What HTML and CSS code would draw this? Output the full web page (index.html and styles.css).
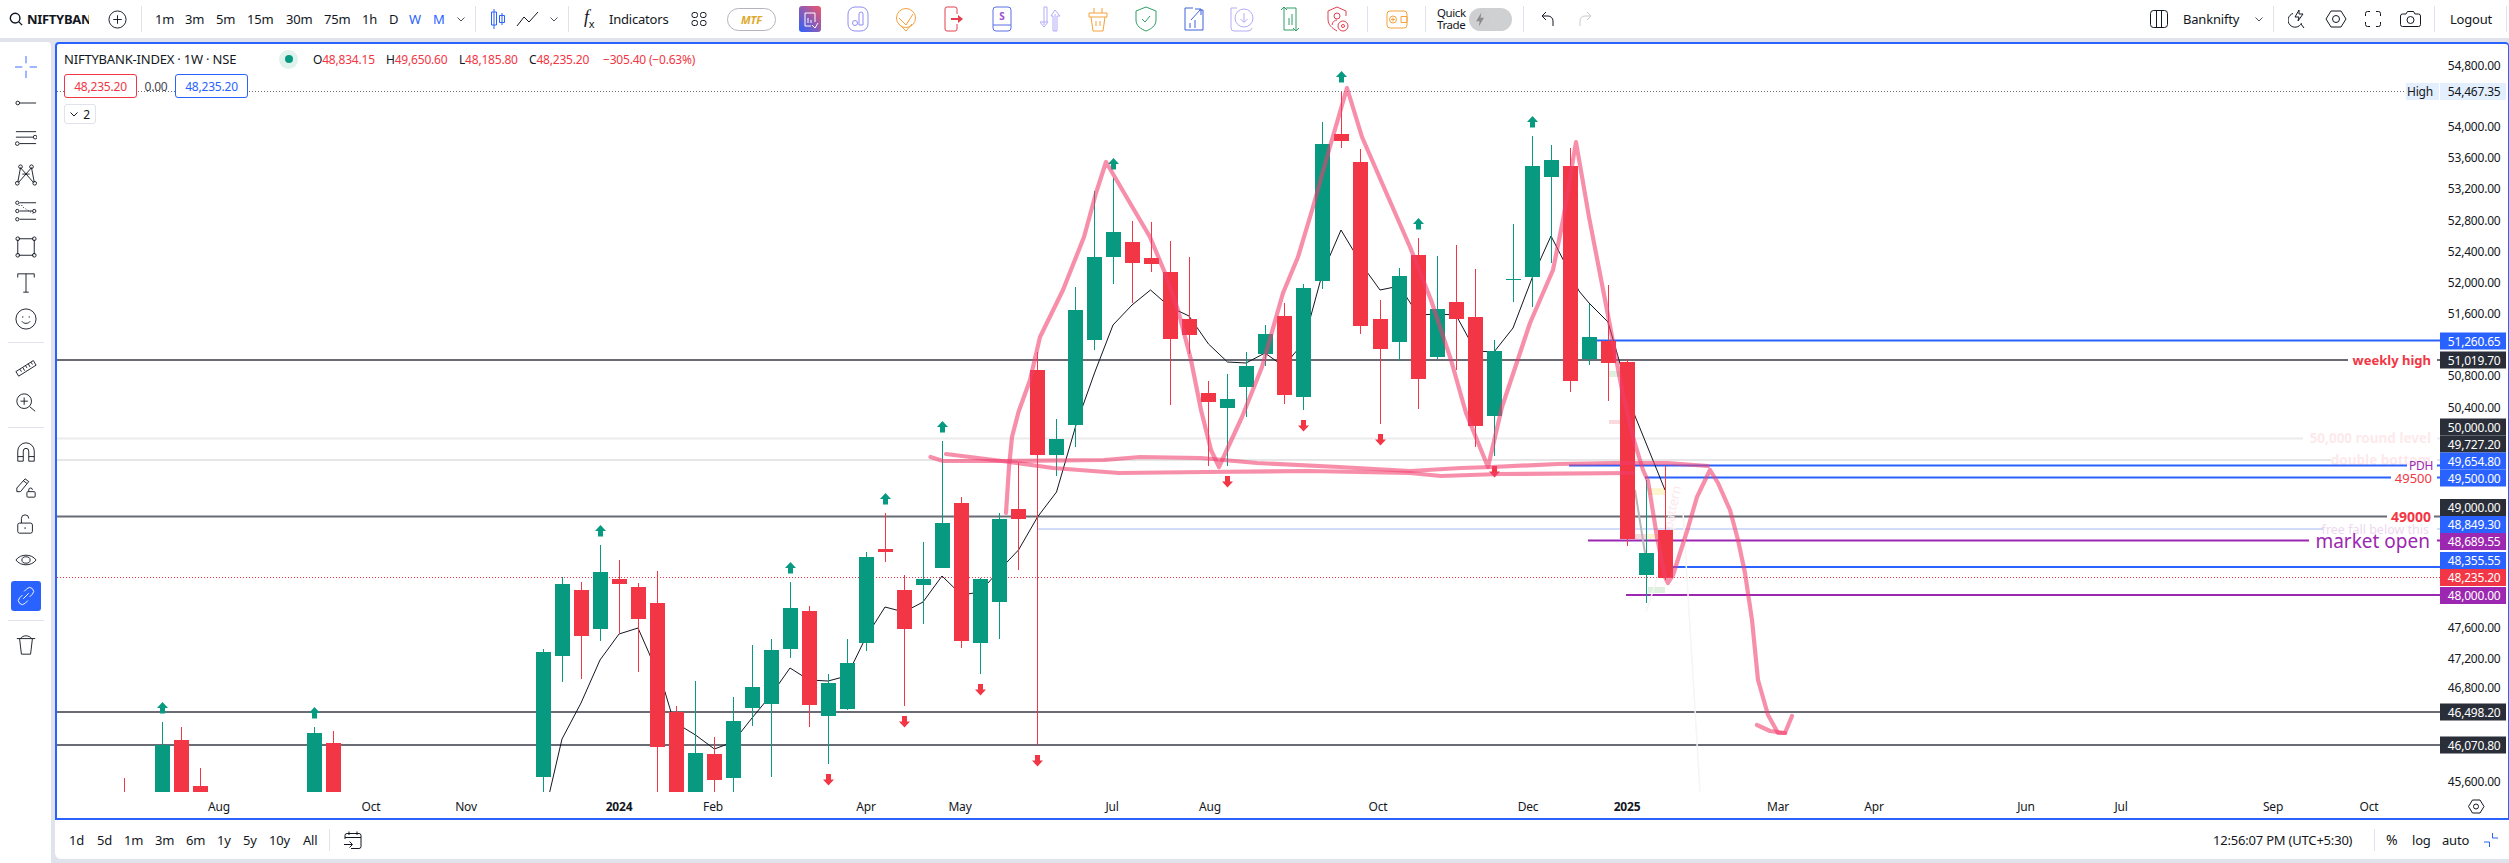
FILE: index.html
```html
<!DOCTYPE html>
<html lang="en">
<head>
<meta charset="utf-8">
<title>NIFTYBANK-INDEX chart</title>
<link rel="stylesheet" href="styles.css">
</head>
<body>
<header class="topbar">
  <div class="search">
    <svg class="i16" viewBox="0 0 16 16"><circle cx="7" cy="7" r="5.500"/><path d="M11 11l4 4"/></svg>
    <span class="symbol"><b>NIFTYBANK-INDEX</b></span>
  </div>
  <svg class="plus" viewBox="0 0 20 20"><circle cx="10" cy="10" r="9"/><path d="M10 5.500v9M5.500 10h9"/></svg>
  <span class="sep sep-a"></span>
  <nav class="tfs">
    <span>1m</span><span>3m</span><span>5m</span><span>15m</span><span>30m</span><span>75m</span><span>1h</span><span>D</span><span class="on">W</span><span class="on">M</span>
    <svg class="chev" viewBox="0 0 8 5"><path d="M.5.5L4 4 7.500.5"/></svg>
  </nav>
  <span class="sep sep-b"></span>
  <svg class="candle-ico" viewBox="0 0 14 20"><path d="M3 0v20M.5 3v13H5.500V3zM11 4v12M8.500 6.500h5v7h-5z"/></svg>
  <svg class="line-ico" viewBox="0 0 23 16"><path d="M1 15L8 6l5 5L22 1"/></svg>
  <svg class="chev chev-b" viewBox="0 0 8 5"><path d="M.5.5L4 4 7.500.5"/></svg>
  <span class="sep sep-c"></span>
  <span class="fx"><i>f</i><sub>x</sub></span>
  <span class="indicators">Indicators</span>
  <svg class="grid-ico" viewBox="0 0 16 16"><rect x="1" y="1.500" width="5.500" height="5" rx="2"/><rect x="9.500" y="1.500" width="5.500" height="5" rx="2"/><rect x="1" y="9.500" width="5.500" height="5" rx="2"/><rect x="9.500" y="9.500" width="5.500" height="5" rx="2"/></svg>
  <span class="mtf">MTF</span>
  <div class="apps">
    <svg viewBox="0 0 24 28"><defs><linearGradient id="grad" x1="0" y1="1" x2="1" y2="0"><stop offset="0" stop-color="#2962ff"/><stop offset="1" stop-color="#f2566b"/></linearGradient></defs><rect x="1" y="1" width="22" height="26" rx="3" fill="url(#grad)" stroke="none"/><path class="w" d="M7 8h10v9M7 8v13h6M10 18v-5M13 18v-3M14 20l3 3 3-5"/></svg>
    <svg class="lav" viewBox="0 0 24 28"><rect x="2" y="2" width="20" height="24" rx="7"/><circle cx="9" cy="18" r="2.500"/><path d="M13 20V9a2 2 0 014 0v11z"/></svg>
    <svg class="ora" viewBox="0 0 24 28"><circle cx="12" cy="13" r="9.500"/><path d="M5 13l7 7 7-11M5 19l7 7 6-7"/></svg>
    <svg class="red" viewBox="0 0 24 28"><path d="M15 9V4a2 2 0 00-2-2H5a2 2 0 00-2 2v20a2 2 0 002 2h8a2 2 0 002-2v-5"/><path class="fr" d="M9 13h7v-3l5 4-5 4v-3H9z"/></svg>
    <svg class="blu" viewBox="0 0 24 28"><rect x="3" y="2" width="18" height="24" rx="3"/><path d="M3 20h18"/><text class="s-glyph" x="12" y="14.500">S</text></svg>
    <svg class="lav2" viewBox="0 0 24 28"><path d="M6 2v18M2 17l4 5 4-5zM6 2h3v15M17 26V9M13 11l4-6 5 6h-3v15h-4V11z"/></svg>
    <svg class="ora" viewBox="0 0 24 28"><path d="M3 8h18v4H3zM5 12l2 14h10l2-14M8 8V3M16 8V3M10 16v5M14 16v5"/></svg>
    <svg class="grn" viewBox="0 0 24 28"><path d="M12 2l10 4v9c0 6-5 9-10 11C7 24 2 21 2 15V6z"/><path d="M8 14l3 3 5-6"/></svg>
    <svg class="blu2" viewBox="0 0 24 28"><path d="M11 3H3v22h18V5h-4M9 15l9-10M13 4h6v6M8 18v5M13 15v8"/></svg>
    <svg class="lav2" viewBox="0 0 24 28"><path d="M7 3H1v20a3 3 0 003 3h14a4 4 0 004-3"/><circle cx="14" cy="13" r="9"/><path d="M14 8v9M10.500 14l3.500 3.500 3.500-3.500"/></svg>
    <svg class="grn" viewBox="0 0 24 28"><path d="M3 5l3-3 3 3M6 3v22h10M21 23l-3 3-3-3M18 25V3H8M11 20v-7M14 20V9"/></svg>
    <svg class="red" viewBox="0 0 24 28"><path d="M11 2L2 6v8c0 6 4 9 9 12M11 2l9 4v5"/><circle cx="11" cy="11" r="3"/><path d="M6 20c0-3 3-5 5-5"/><circle cx="17" cy="21" r="5"/><circle cx="17" cy="21" r="1.500"/></svg>
  </div>
  <span class="sep sep-d"></span>
  <svg class="wallet ora" viewBox="0 0 24 24"><rect x="2" y="4" width="20" height="17" rx="3"/><circle cx="8" cy="12.500" r="3.500"/><path d="M8 10.500v4M6 12.500h4M16 9.500h6v6h-6z"/></svg>
  <span class="sep sep-e"></span>
  <span class="quick">Quick<br>Trade</span>
  <span class="toggle"><svg viewBox="0 0 24 24"><circle cx="12" cy="12" r="11"/><path class="bolt" d="M13 4l-6 10h4l-1 6 6-10h-4z"/></svg></span>
  <span class="sep sep-f"></span>
  <svg class="undo" viewBox="0 0 14 16"><path d="M5 1L1 5l4 4M1 5h6a5 5 0 015 5v5"/></svg>
  <svg class="undo redo" viewBox="0 0 14 16"><path d="M9 1l4 4-4 4M13 5H7a5 5 0 00-5 5v5"/></svg>
  <div class="top-right">
    <svg class="cols" viewBox="0 0 18 18"><rect x=".5" y=".5" width="17" height="17" rx="3"/><path d="M6.500.5v17M11.500.5v17"/></svg>
    <span class="layout">Banknifty</span>
    <svg class="chev chev-c" viewBox="0 0 8 5"><path d="M.5.5L4 4 7.500.5"/></svg>
    <span class="sep sep-g"></span>
    <svg class="flash" viewBox="0 0 19 20"><path d="M5 4.500A7 7 0 1013.500 14M16 19l-3-4M11 1L7 8h4l-1 4 5-7h-4z"/></svg>
    <svg class="hex" viewBox="0 0 22 18"><path d="M1 9l5-8h10l5 8-5 8H6z"/><circle cx="11" cy="9" r="3.500"/></svg>
    <svg class="full" viewBox="0 0 16 16"><path d="M.5 5V2.500a2 2 0 012-2H5M11 .5h2.500a2 2 0 012 2V5M15.500 11v2.500a2 2 0 01-2 2H11M5 15.500H2.500a2 2 0 01-2-2V11"/></svg>
    <svg class="cam" viewBox="0 0 21 16"><path d="M2.500 3H6l1.500-2.500h6L15 3h3.500a2 2 0 012 2v8.500a2 2 0 01-2 2h-16a2 2 0 01-2-2V5a2 2 0 012-2z"/><circle cx="10.500" cy="9" r="3.500"/></svg>
    <span class="sep sep-h"></span>
    <span class="logout">Logout</span>
    <span class="sep sep-i"></span>
  </div>
</header>

<div class="main">
  <aside class="sidebar">
    <div class="slot"><svg class="blue-stroke" viewBox="0 0 24 24"><path d="M0 12h8M16 12h8M12 0v8M12 16v8"/></svg></div>
    <div class="slot"><svg viewBox="0 0 24 24"><circle cx="3" cy="12" r="2"/><path d="M5 12h18"/></svg></div>
    <div class="slot"><svg viewBox="0 0 24 24"><path d="M1 4h22M1 10h19M5 17h18"/><circle cx="22" cy="10" r="2"/><circle cx="2.500" cy="17" r="2"/></svg></div>
    <div class="slot"><svg viewBox="0 0 24 24"><path d="M3 20L6 4l14 16M18 4l3 16M18 4L4 20M8 11h8"/><circle cx="2.500" cy="21" r="2"/><circle cx="6" cy="3" r="2"/><circle cx="18" cy="3" r="2"/><circle cx="21.500" cy="21" r="2"/></svg></div>
    <div class="slot"><svg viewBox="0 0 24 24"><path d="M5 3h18M5 12h14M5 21h18"/><path class="dots" d="M4 6h4M9 8l11 7"/><circle cx="2.500" cy="3" r="1.800"/><circle cx="2.500" cy="12" r="1.800"/><circle cx="2.500" cy="21" r="1.800"/><circle cx="21" cy="12" r="1.800"/></svg></div>
    <div class="slot"><svg viewBox="0 0 24 24"><path d="M4 3h16M4 21h16M3 4v16M21 4v16"/><circle cx="3" cy="3" r="2"/><circle cx="21" cy="3" r="2"/><circle cx="3" cy="21" r="2"/><circle cx="21" cy="21" r="2"/></svg></div>
    <div class="slot"><svg viewBox="0 0 24 24"><path d="M3 6V2h18v4M12 2v20M9 22h6"/></svg></div>
    <div class="slot"><svg viewBox="0 0 24 24"><circle cx="12" cy="12" r="11"/><path d="M7.500 14.500c2 3 7 3 9 0M8.500 9v1.500M15.500 9v1.500"/></svg></div>
    <hr class="rule rule-first">
    <div class="slot"><svg viewBox="0 0 24 24"><path d="M1 17L20 5l3 5L4 22zM5.500 14.500l1.500 2.500M8.500 12.500l2 3.500M11.500 10.500l1.500 2.500M14.500 8.500l2 3.500M17.500 6.800l1.500 2.500"/></svg></div>
    <div class="slot"><svg viewBox="0 0 24 24"><circle cx="10" cy="10" r="8"/><path d="M10 6v8M6 10h8M16 16l6 5"/></svg></div>
    <hr class="rule">
    <div class="slot"><svg viewBox="0 0 24 24"><path d="M3 22V11a9 9 0 0118 0v11h-6V11a3 3 0 00-6 0v11zM3 17h6M15 17h6"/></svg></div>
    <div class="slot"><svg viewBox="0 0 24 24"><path d="M2 12L11 2l4 3-9 11-4 0zM9 4l4 3"/><rect x="13" y="16" width="9" height="6" rx="1"/><path d="M15 16v-2a2 2 0 014 0"/></svg></div>
    <div class="slot"><svg viewBox="0 0 24 24"><rect x="3" y="11" width="16" height="11" rx="2"/><path d="M7 11V6a4 4 0 018 0M11 15.500v2"/></svg></div>
    <div class="slot"><svg viewBox="0 0 24 24"><path d="M1 12c5-7 17-7 22 0-5 7-17 7-22 0z"/><ellipse cx="12" cy="12" rx="4.500" ry="3.500"/></svg></div>
    <div class="slot active"><svg class="white-stroke" viewBox="0 0 24 24"><path d="M10 7l3-3a4 4 0 016 6l-3 3M14 17l-3 3a4 4 0 01-6-6l3-3M9 15l6-6"/></svg></div>
    <hr class="rule">
    <div class="slot"><svg viewBox="0 0 24 24"><path d="M2 5h20M5 5l2 17h10l2-17M6 5c2-4 10-4 12 0"/></svg></div>
  </aside>

  <section class="workspace">
    <div class="chart">
      <div class="legend">
        <div class="leg-row">
          <span class="leg-title">NIFTYBANK-INDEX · 1W · NSE</span>
          <span class="status"><span class="status-dot"></span></span>
          <span class="ohlc">O<em>48,834.15</em></span>
          <span class="ohlc">H<em>49,650.60</em></span>
          <span class="ohlc ohlc-l">L<em>48,185.80</em></span>
          <span class="ohlc ohlc-c">C<em>48,235.20</em></span>
          <em class="chg">−305.40 (−0.63%)</em>
        </div>
        <div class="leg-row prices">
          <span class="pbox pbox-red">48,235.20</span>
          <span class="spread">0.00</span>
          <span class="pbox pbox-blue">48,235.20</span>
        </div>
        <div class="collapse"><svg viewBox="0 0 8 5"><path d="M.5.5L4 4 7.500.5"/></svg>2</div>
      </div>

      <svg class="plot" width="2451" height="774" viewBox="57 44 2451 774">
        <defs>
          <path id="up" d="M-5.500 6L0 0l5.500 6H2.500v5.500h-5V6z"/>
          <path id="down" d="M-5.500 5.500L0 11.500l5.500-6H2.500V0h-5v5.500z"/>
        </defs>

        <g class="hl">
          <path class="dark" d="M57 360H2348M2437 360h3M57 516.500H2387M2434 516.500h6M57 712H2440M57 745H2440"/>
          <path class="faint" d="M57 438.500H2303M2437 438.500h3"/>
          <path class="faint2" d="M57 460H2331M2437 460h3"/>
          <path class="lb" d="M1037 529H2323M2437 529h3"/>
          <path class="bl" d="M1597 340.500H2440M1569 465.500H2407M2437 465.500h3M1645 477.500H2391M2437 477.500h3M1673 567H2440"/>
          <path class="pu" d="M1588 540.500H2309M2437 540.500h3M1626 595H2440"/>
          <path class="dot-grey" d="M57 91.500H2406"/>
          <path class="dot-red" d="M57 577.500H2440"/>
        </g>

        <g class="ghost">
          <rect class="g-g" x="1609" y="371" width="11" height="6"/>
          <rect class="g-r" x="1609" y="420" width="11" height="4"/>
          <rect class="g-y" x="1648" y="488" width="17" height="7"/>
          <rect class="g-r" x="1635" y="534" width="11" height="5"/>
          <rect class="g-y" x="1646" y="534" width="11" height="5"/>
          <rect class="g-g" x="1648" y="587" width="17" height="6"/>
          <path class="g-line" d="M1635 490L1645 553"/>
          <path class="g-line2" d="M1683 512L1700 792"/>
          <path class="g-line2" d="M1646 612L1660 570"/>
          <text class="g-text" transform="translate(1672 530) rotate(-78)">pattern</text>
        </g>

        <polyline class="sma" points="549.700,792 562,739 581,703 600,660 619,634 638,628 649,653 665,692 671,712 684,728 695.500,735 714.400,749 733,742 752,718 771,695 790,668 809,680 828,681 847,676 866,637 885,607 904,612 923,602 942,576 961.500,595 980,592 999.500,570 1018.500,550 1037.500,517 1056.500,492 1076,425 1094.500,373 1113,325 1132,305 1150.500,290 1170,307 1189,316 1208.500,344 1227.500,362 1246,363 1265,353 1284.500,367 1293,355 1303.500,343 1322.500,273 1341,230 1353,250 1367,272 1380,290 1399.500,286 1418,315 1437,314 1456,315 1475.500,351 1494,352 1513,328 1532.500,277 1551,236 1570,273 1579,291 1589,303 1608,322 1619,360 1635,416 1665,490"/>

        <g class="up">
          <path d="M162.500 722V792"/><rect x="155" y="745" height="47"/>
          <path d="M314.500 727V792"/><rect x="307" y="733" height="59"/>
          <path d="M543.500 649V792"/><rect x="536" y="652" height="125"/>
          <path d="M562.500 577V682"/><rect x="555" y="584" height="72"/>
          <path d="M600.500 545V641"/><rect x="593" y="572" height="57"/>
          <path d="M695.500 681V792"/><rect x="688" y="753" height="39"/>
          <path d="M733.500 697V792"/><rect x="726" y="721" height="57"/>
          <path d="M752.500 645V726"/><rect x="745" y="687" height="21"/>
          <path d="M771.500 639V777"/><rect x="764" y="650" height="54"/>
          <path d="M790.500 582V658"/><rect x="783" y="608" height="41"/>
          <path d="M828.500 674V764"/><rect x="821" y="683" height="33"/>
          <path d="M847.500 639V710"/><rect x="840" y="663" height="46"/>
          <path d="M866.500 552V651"/><rect x="859" y="557" height="86"/>
          <path d="M923.500 542V624"/><rect x="916" y="579" height="6"/>
          <path d="M942.500 441V568"/><rect x="935" y="523" height="45"/>
          <path d="M980.500 578V674"/><rect x="973" y="579" height="64"/>
          <path d="M999.500 513V639"/><rect x="992" y="519" height="83"/>
          <path d="M1056.500 419V476"/><rect x="1049" y="439" height="16"/>
          <path d="M1075.500 287V447"/><rect x="1068" y="310" height="115"/>
          <path d="M1094.500 191V350"/><rect x="1087" y="257" height="83"/>
          <path d="M1113.500 178V284"/><rect x="1106" y="232" height="25"/>
          <path d="M1227.500 374V466"/><rect x="1220" y="399" height="9"/>
          <path d="M1246.500 352V417"/><rect x="1239" y="366" height="21"/>
          <path d="M1265.500 325V366"/><rect x="1258" y="334" height="20"/>
          <path d="M1303.500 284V410"/><rect x="1296" y="288" height="109"/>
          <path d="M1322.500 122V289"/><rect x="1315" y="144" height="137"/>
          <path d="M1399.500 268V361"/><rect x="1392" y="276" height="66"/>
          <path d="M1437.500 256V359"/><rect x="1430" y="309" height="48"/>
          <path d="M1494.500 340V456"/><rect x="1487" y="351" height="65"/>
          <path d="M1513.500 224V302"/><rect x="1506" y="279" height="1"/>
          <path d="M1532.500 136V307"/><rect x="1525" y="166" height="111"/>
          <path d="M1551.500 145V263"/><rect x="1544" y="160" height="17"/>
          <path d="M1589.500 304V365"/><rect x="1582" y="337" height="22"/>
          <path d="M1646.500 480V603"/><rect x="1639" y="553" height="22"/>
          <use href="#up" x="162.500" y="702"/><use href="#up" x="314.500" y="707"/>
          <use href="#up" x="600.500" y="525"/><use href="#up" x="790.500" y="562"/>
          <use href="#up" x="885.500" y="493"/><use href="#up" x="942.500" y="421"/>
          <use href="#up" x="1113.500" y="158"/><use href="#up" x="1341.500" y="71"/>
          <use href="#up" x="1418.500" y="218"/><use href="#up" x="1532.500" y="116"/>
        </g>

        <g class="dn">
          <path d="M124.500 778V792"/>
          <path d="M181.500 727V792"/><rect x="174" y="740" height="52"/>
          <path d="M200.500 768V792"/><rect x="193" y="786" height="6"/>
          <path d="M333.500 731V792"/><rect x="326" y="743" height="49"/>
          <path d="M581.500 582V679"/><rect x="574" y="590" height="46"/>
          <path d="M619.500 560V634"/><rect x="612" y="579" height="5"/>
          <path d="M638.500 583V672"/><rect x="631" y="587" height="32"/>
          <path d="M657.500 571V792"/><rect x="650" y="603" height="144"/>
          <path d="M676.500 706V792"/><rect x="669" y="712" height="80"/>
          <path d="M714.500 737V792"/><rect x="707" y="754" height="26"/>
          <path d="M809.500 606V727"/><rect x="802" y="611" height="94"/>
          <path d="M885.500 513V562"/><rect x="878" y="549" height="3"/>
          <path d="M904.500 575V706"/><rect x="897" y="590" height="39"/>
          <path d="M961.500 497V648"/><rect x="954" y="503" height="138"/>
          <path d="M1018.500 463V570"/><rect x="1011" y="509" height="10"/>
          <path d="M1037.500 352V745"/><rect x="1030" y="370" height="85"/>
          <path d="M1132.500 221V303"/><rect x="1125" y="242" height="21"/>
          <path d="M1151.500 222V272"/><rect x="1144" y="258" height="6"/>
          <path d="M1170.500 241V405"/><rect x="1163" y="272" height="67"/>
          <path d="M1189.500 257V354"/><rect x="1182" y="319" height="16"/>
          <path d="M1208.500 381V466"/><rect x="1201" y="393" height="9"/>
          <path d="M1284.500 303V404"/><rect x="1277" y="316" height="79"/>
          <path d="M1341.500 92V148"/><rect x="1334" y="134" height="7"/>
          <path d="M1360.500 149V334"/><rect x="1353" y="162" height="164"/>
          <path d="M1380.500 300V424"/><rect x="1373" y="319" height="30"/>
          <path d="M1418.500 238V409"/><rect x="1411" y="255" height="124"/>
          <path d="M1456.500 245V370"/><rect x="1449" y="302" height="17"/>
          <path d="M1475.500 269V447"/><rect x="1468" y="317" height="109"/>
          <path d="M1570.500 148V392"/><rect x="1563" y="166" height="215"/>
          <path d="M1608.500 285V401"/><rect x="1601" y="341" height="22"/>
          <path d="M1627.500 359V546"/><rect x="1620" y="362" height="177"/>
          <path d="M1665.500 466V580"/><rect x="1658" y="530" height="48"/>
          <use href="#down" x="828.500" y="774"/><use href="#down" x="904.500" y="716"/>
          <use href="#down" x="980.500" y="684"/><use href="#down" x="1037.500" y="755"/>
          <use href="#down" x="1303.500" y="420"/><use href="#down" x="1380.500" y="434"/>
          <use href="#down" x="1494.500" y="466"/><use href="#down" x="1227.500" y="476"/>
        </g>

        <g class="pen">
          <polyline points="1006,513 1009,467 1012,437 1018.500,412 1030,380 1040,337 1063,290 1084,237 1096,193 1106,162 1130,203 1150,237 1165,273 1178,310 1191,360 1201,410 1211,450 1219,467 1242,417 1262,367 1283,293 1298,257 1313,207 1329,150 1347,88 1362,137 1382,183 1410,247 1431,300 1451,360 1466,413 1488,467 1502,407 1530,323 1553,270 1563,220 1576,142 1589,217 1607,310 1622,390 1633,437 1643,470 1648,481 1657,537 1665,577 1668,583 1673,575 1688,528 1697,497 1710,470 1718,483 1730,510 1738,540 1745,573 1752,620 1758,680 1768,715 1778,733 1785,733 1792,716"/>
          <polyline points="1757,725 1770,731 1785,733"/>
          <polyline points="930.500,457 943,461 1002,461 1104,460 1140,457 1201,458 1257,463 1339,467 1410,471 1461,468 1492,467 1558,464 1614,463 1667,463 1708,466"/>
          <polyline points="946,454 1002,461 1053,468 1119,473 1206,472 1308,471 1410,473 1441,476 1500,474 1633,473"/>
        </g>

        <g class="notes">
          <text class="n-red n-b" x="2431" y="360">weekly high</text>
          <text class="n-fade n-b" x="2431" y="438">50,000 round level</text>
          <text class="n-fade n-b" x="2431" y="460">double bottom</text>
          <text class="n-pur" x="2433" y="465.500">PDH</text>
          <text class="n-red" x="2432" y="477.500">49500</text>
          <text class="n-red n-b n-big2" x="2431" y="516.500">49000</text>
          <text class="n-fade2" x="2429" y="529">free fall below this</text>
          <text class="n-big" x="2430" y="541">market open</text>
        </g>

        <g class="axis">
          <text x="2500.500" y="65">54,800.00</text>
          <text x="2500.500" y="126.500">54,000.00</text>
          <text x="2500.500" y="157.500">53,600.00</text>
          <text x="2500.500" y="188.500">53,200.00</text>
          <text x="2500.500" y="220.500">52,800.00</text>
          <text x="2500.500" y="251.500">52,400.00</text>
          <text x="2500.500" y="282.500">52,000.00</text>
          <text x="2500.500" y="313.500">51,600.00</text>
          <text x="2500.500" y="375.500">50,800.00</text>
          <text x="2500.500" y="407">50,400.00</text>
          <text x="2500.500" y="627">47,600.00</text>
          <text x="2500.500" y="658">47,200.00</text>
          <text x="2500.500" y="687">46,800.00</text>
          <text x="2500.500" y="781">45,600.00</text>
        </g>

        <g class="tags">
          <rect class="t-hi" x="2406" y="83" width="33" height="17"/><rect class="t-hi" x="2440" y="83" width="66" height="17"/>
          <text class="t-dark" x="2433" y="91.500">High</text><text class="t-dark" x="2500.500" y="91.500">54,467.35</text>

          <rect class="t-bl" x="2440" y="332.500" width="66" height="17"/><text x="2500.500" y="341">51,260.65</text>
          <rect class="t-dk" x="2440" y="351.500" width="66" height="17"/><text x="2500.500" y="360">51,019.70</text>
          <rect class="t-dk" x="2440" y="418.500" width="66" height="17"/><text x="2500.500" y="427">50,000.00</text>
          <rect class="t-dk" x="2440" y="435.500" width="66" height="17"/><text x="2500.500" y="444">49,727.20</text>
          <rect class="t-bl" x="2440" y="452.500" width="66" height="17"/><text x="2500.500" y="461">49,654.80</text>
          <rect class="t-bl" x="2440" y="469.500" width="66" height="17"/><text x="2500.500" y="478">49,500.00</text>
          <rect class="t-dk" x="2440" y="499" width="66" height="17"/><text x="2500.500" y="507.500">49,000.00</text>
          <rect class="t-bl" x="2440" y="516" width="66" height="17"/><text x="2500.500" y="524.500">48,849.30</text>
          <rect class="t-pu" x="2440" y="533" width="66" height="17"/><text x="2500.500" y="541.500">48,689.55</text>
          <rect class="t-bl" x="2440" y="552" width="66" height="17"/><text x="2500.500" y="560.500">48,355.55</text>
          <rect class="t-rd" x="2440" y="569" width="66" height="17"/><text x="2500.500" y="577.500">48,235.20</text>
          <rect class="t-pu" x="2440" y="587" width="66" height="17"/><text x="2500.500" y="595.500">48,000.00</text>
          <rect class="t-dk" x="2440" y="703.500" width="66" height="17"/><text x="2500.500" y="712">46,498.20</text>
          <rect class="t-dk" x="2440" y="736.500" width="66" height="17"/><text x="2500.500" y="745">46,070.80</text>
        </g>

        <g class="time">
          <text x="219" y="806">Aug</text><text x="371" y="806">Oct</text><text x="466" y="806">Nov</text>
          <text class="yr" x="619" y="806">2024</text>
          <text x="713" y="806">Feb</text><text x="866" y="806">Apr</text><text x="960" y="806">May</text>
          <text x="1112" y="806">Jul</text><text x="1210" y="806">Aug</text><text x="1378" y="806">Oct</text><text x="1528" y="806">Dec</text>
          <text class="yr" x="1627" y="806">2025</text>
          <text x="1778" y="806">Mar</text><text x="1874" y="806">Apr</text><text x="2026" y="806">Jun</text>
          <text x="2121" y="806">Jul</text><text x="2273" y="806">Sep</text><text x="2369" y="806">Oct</text>
        </g>
        <g class="axis-gear">
          <path d="M2468.500 806.500l4-6.500h7.500l4 6.500-4 6.500h-7.500z"/><circle cx="2476" cy="806.500" r="2.500"/>
        </g>
      </svg>
    </div>

    <footer class="bottombar">
      <div class="ranges">
        <span>1d</span><span>5d</span><span>1m</span><span>3m</span><span>6m</span><span>1y</span><span>5y</span><span>10y</span><span>All</span>
      </div>
      <span class="sep sep-j"></span>
      <svg class="cal" viewBox="0 0 18 18"><path d="M1 8V4.500a2 2 0 012-2h12a2 2 0 012 2v11a2 2 0 01-2 2H7M1 6.500h16M5 .5v3.500M13 .5v3.500M0 13.500h8M5.500 10.500l3 3-3 3"/></svg>
      <div class="bottom-right">
        <span class="clock">12:56:07 PM (UTC+5:30)</span>
        <span class="sep sep-k"></span>
        <span class="pct">%</span><span class="logs">log</span><span class="auto">auto</span>
        <svg class="resize" viewBox="0 0 14 14"><path d="M0 9h5.500v5M8.500 0v5H14"/></svg>
      </div>
    </footer>
  </section>
</div>
</body>
</html>
```
FILE: styles.css
```css
* { box-sizing: border-box; }
html, body { margin: 0; height: 100%; }
body {
  width: 2509px; height: 863px; overflow: hidden;
  background: #e0e3eb; color: #131722;
  font: 13px "Noto Sans", "Open Sans", sans-serif;
  letter-spacing: -.2px;
}
svg { display: block; flex: none; fill: none; stroke: #131722; stroke-width: 1; }
em { font-style: normal; }

/* top bar */
.topbar { height: 38px; background: #fff; display: flex; align-items: center; }
.search { display: flex; align-items: center; margin-left: 9px; width: 80px; flex: none; }
.i16 { width: 14px; height: 14px; stroke-width: 1.6; }
.symbol { display: block; width: 62px; margin-left: 4px; overflow: hidden; white-space: nowrap; font-size: 13px; letter-spacing: -.3px; }
.plus { width: 19px; height: 19px; margin-left: 19px; }
.sep { display: block; flex: none; width: 1px; height: 26px; background: #e0e3eb; }
.sep-a { margin-left: 14px; }
.tfs { display: grid; grid-template-columns: 30px 31px 31px 39px 38px 38px 27px 20px 24px 24px 8px; margin-left: 13px; align-items: center; }
.tfs .on { color: #2962ff; }
.chev { width: 8px; height: 5px; stroke: #50535e; }
.sep-b { margin-left: 10px; }
.candle-ico { width: 14px; height: 20px; margin-left: 15px; stroke: #2962ff; }
.line-ico { width: 23px; height: 16px; margin-left: 11px; }
.chev-b { margin-left: 11px; }
.sep-c { margin-left: 10px; }
.fx { margin-left: 15px; width: 25px; font-size: 18px; line-height: 1; font-family: "Liberation Serif", serif; flex: none; }
.fx sub { font: 11px "Noto Sans", sans-serif; }
.indicators { margin-left: 0; width: 62px; flex: none; }
.grid-ico { width: 16px; height: 16px; margin-left: 20px; }
.mtf { margin-left: 20px; width: 49px; height: 23px; border: 1px solid #b2b5be; border-radius: 12px; display: flex; align-items: center; justify-content: center; flex: none; font: italic 700 11px "Noto Sans", sans-serif; color: #e0a92f; }
.apps { display: grid; grid-template-columns: repeat(12, 48px); margin-left: 10px; flex: none; }
.apps svg { width: 24px; height: 28px; margin: 0 auto; }
.w { stroke: #fff; }
.lav { stroke: #8f8cf5; }
.lav2 { stroke: #b5abf7; }
.ora { stroke: #f5a13c; }
.red { stroke: #e2404f; }
.fr { fill: #e2404f; stroke: none; }
.blu { stroke: #5a6fe8; }
.blu2 { stroke: #3d62d8; }
.grn { stroke: #2f9e66; }
.s-glyph { font: 700 10px "Noto Sans", sans-serif; fill: #9c4fd0; stroke: none; text-anchor: middle; }
.sep-d { margin-left: 5px; }
.wallet { width: 24px; height: 24px; margin-left: 17px; }
.sep-e { margin-left: 16px; }
.quick { margin-left: 11px; width: 32px; flex: none; font-size: 11.500px; line-height: 12px; letter-spacing: -.4px; }
.toggle { width: 43px; height: 23px; border-radius: 12px; background: #cfd0d2; display: flex; align-items: center; flex: none; padding-left: 1px; }
.toggle svg { width: 21px; height: 21px; stroke: #8f9094; }
.toggle circle { fill: #cfcfd1; stroke: none; }
.bolt { fill: #8a8b8f; stroke: none; }
.sep-f { margin-left: 11px; }
.undo { width: 14px; height: 16px; margin-left: 17px; }
.redo { margin-left: 23px; stroke: #c8cad0; }
.top-right { margin-left: auto; display: flex; align-items: center; padding-right: 2px; }
.cols { width: 18px; height: 18px; }
.layout { margin-left: 15px; width: 58px; font-size: 13px; }
.chev-c { margin-left: 14px; }
.sep-g { margin-left: 10px; }
.flash { width: 19px; height: 20px; margin-left: 14px; }
.hex { width: 22px; height: 18px; margin-left: 18px; }
.full { width: 16px; height: 16px; margin-left: 18px; }
.cam { width: 21px; height: 16px; margin-left: 19px; }
.sep-h { margin-left: 13px; }
.logout { margin-left: 15px; width: 42px; }
.sep-i { margin-left: 14px; }

/* main */
.main { display: flex; margin-top: 4px; height: 821px; }
.sidebar { width: 51px; height: 821px; background: #fff; border-top-right-radius: 4px; padding-top: 6.500px; flex: none; display: flex; flex-direction: column; align-items: center; }
.slot { width: 30px; height: 36px; display: flex; align-items: center; justify-content: center; flex: none; }
.slot svg { width: 22px; height: 22px; }
.dots { stroke-dasharray: 1 2; }
.blue-stroke { stroke: #2962ff; }
.white-stroke { stroke: #fff; }
.active { height: 30px; margin: 3px 0; background: #2962ff; border-radius: 3px; }
.rule { width: 36px; height: 1px; border: 0; background: #e0e3eb; margin: 6px 0; flex: none; }
.rule-first { margin: 5.500px 0; }
.workspace { margin-left: 4px; width: 2454px; display: flex; flex-direction: column; }
.chart { position: relative; height: 778px; background: #fff; border: 2px solid #2962ff; border-right-width: 1px; border-radius: 4px 4px 0 0; }
.plot { display: block; }

/* legend */
.legend { position: absolute; left: 7px; top: 5px; z-index: 2; }
.leg-row { display: flex; align-items: center; height: 20px; white-space: nowrap; font-size: 12px; }
.leg-title { width: 199px; font-size: 13px; }
.status { margin-left: 16px; width: 19px; height: 19px; border-radius: 50%; background: #dff2ec; display: flex; align-items: center; justify-content: center; flex: none; }
.status-dot { width: 8px; height: 8px; border-radius: 50%; background: #089981; }
.ohlc { width: 73px; margin-left: 0; flex: none; }
.status + .ohlc { margin-left: 15px; }
.ohlc-l { width: 70px; }
.ohlc-c { width: 74px; }
.ohlc em, .chg { color: #f23645; }
.prices { margin-top: 5px; height: 24px; }
.pbox { width: 73px; height: 24px; border: 1px solid; border-radius: 3px; background: #fff; display: flex; align-items: center; justify-content: center; flex: none; }
.pbox-red { color: #f23645; border-color: #f23645; }
.pbox-blue { color: #2962ff; border-color: #2962ff; }
.spread { width: 38px; text-align: center; flex: none; color: #434651; }
.collapse { margin-top: 6px; width: 32px; height: 20px; border: 1px solid #e0e3eb; border-radius: 3px; background: #fff; display: flex; align-items: center; justify-content: center; gap: 5px; font-size: 12px; }
.collapse svg { width: 8px; height: 5px; }

/* plot */
.hl path { fill: none; }
.dark { stroke: #696b75; stroke-width: 2; }
.faint { stroke: #ebebeb; stroke-width: 2; }
.faint2 { stroke: #e6e6e6; stroke-width: 2; }
.lb { stroke: #d1dcfb; stroke-width: 2; }
.bl { stroke: #2962ff; stroke-width: 2; }
.pu { stroke: #9c27b0; stroke-width: 2; }
.dot-grey { stroke: #6a6d78; stroke-dasharray: 1 2; }
.dot-red { stroke: #f23645; stroke-dasharray: 1 2; }
.g-g { fill: #dff0df; stroke: none; }
.g-r { fill: #fadadd; stroke: none; }
.g-y { fill: #fbf6cf; stroke: none; }
.g-line { stroke: #b8b8b8; stroke-width: 2; }
.g-line2 { stroke: #f5f5f5; stroke-width: 1.500; }
.g-text { font: 13px "Noto Sans", sans-serif; fill: #fde8ea; stroke: none; }
.sma { fill: none; stroke: #131722; stroke-width: 1; stroke-linejoin: round; }
.up { stroke: #089981; fill: #089981; }
.dn { stroke: #f23645; fill: #f23645; }
.up rect, .dn rect { width: 15px; stroke: none; }
.up use, .dn use { stroke: none; }
.pen polyline { fill: none; stroke: #f23e6e; stroke-opacity: .58; stroke-width: 4.200; stroke-linejoin: round; stroke-linecap: round; }
.notes text { stroke: none; text-anchor: end; dominant-baseline: central; font-family: "Noto Sans", sans-serif; letter-spacing: 0; font-size: 13px; }
.n-b { font-weight: 700; }
.n-red { fill: #f23645; }
.notes .n-big2 { font-size: 14px; }
.notes .n-fade { fill: #f23645; opacity: .1; font-size: 13.500px; }
.notes .n-fade2 { fill: #9c27b0; opacity: .18; font-size: 12.500px; }
.notes .n-pur { fill: #9c27b0; font-size: 12px; letter-spacing: -.3px; }
.notes .n-big { fill: #9c27b0; font-size: 19px; }
.axis text, .tags text { stroke: none; text-anchor: end; dominant-baseline: central; font: 12px "Noto Sans", sans-serif; letter-spacing: -.2px; }
.axis text { fill: #131722; }
.tags text { fill: #fff; }
.tags .t-dark { fill: #131722; }
.tags rect { stroke: none; }
.t-hi { fill: #e3effd; }
.t-bl { fill: #2962ff; }
.t-dk { fill: #2a2e39; }
.t-pu { fill: #9c27b0; }
.t-rd { fill: #f23645; }
.time text { stroke: none; fill: #131722; text-anchor: middle; dominant-baseline: central; font: 12px "Noto Sans", sans-serif; }
.time .yr { font-weight: 700; }

/* bottom */
.bottombar { height: 39px; background: #fff; border-radius: 0 0 0 6px; display: flex; align-items: center; flex: none; }
.ranges { display: grid; grid-template-columns: 28px 27px 31px 31px 31px 26px 26px 34px 26px; margin-left: 14px; flex: none; }
.sep-j { height: 22px; }
.cal { width: 18px; height: 18px; margin-left: 14px; }
.bottom-right { margin-left: auto; display: flex; align-items: center; padding-right: 11px; }
.clock { width: 150px; white-space: nowrap; font-size: 13px; color: #131722; }
.sep-k { height: 22px; margin-left: 11px; }
.pct { margin-left: 11px; width: 26px; flex: none; font-size: 14px; }
.logs { width: 30px; flex: none; }
.auto { width: 42px; flex: none; }
.resize { width: 14px; height: 14px; stroke: #2962ff; }
```
